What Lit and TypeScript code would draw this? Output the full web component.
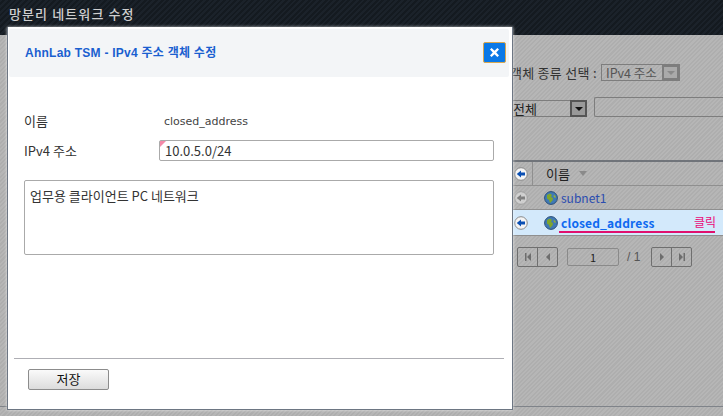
import { LitElement, html, css } from "lit";
import { customElement } from "lit/decorators.js";

const globe = html`<svg class="globe" width="14" height="14" viewBox="0 0 14 14">
  <circle cx="7" cy="7" r="6.4" fill="#3f79b5" stroke="#2a4f78" stroke-width="1"/>
  <path d="M3 4 L6 2.5 L8 4 L7 6 L9 7 L8.5 9.5 L6 12 L5 9 L3 7.5Z" fill="#7fa52c"/>
  <path d="M10 3.5 L12 6 L11 7 L9.5 5.5Z" fill="#8fb03a"/>
</svg>`;

const arrowBtn = (cls: string) => html`<svg class=${cls} width="14" height="14" viewBox="0 0 14 14">
  <circle cx="7" cy="7" r="6.3" fill="#f4f4f4" stroke="#8a8a8a"/>
  <path class="ar" d="M2.8 7 L7 3.6 V5.6 H11 V8.4 H7 V10.4Z"/>
</svg>`;

const pageIcon = (d: string) => html`<svg width="10" height="10" viewBox="0 0 10 10"><path d=${d} fill="#6d6d6d"/></svg>`;

@customElement("app-root")
export class AppRoot extends LitElement {
  static styles = css`
    :host { display: block; width: 723px; height: 416px; position: relative; overflow: hidden;
      font-family: "Noto Sans CJK KR", "Liberation Sans", sans-serif; font-size: 13px; color: #222; }
    .page { height: 416px; display: flex; flex-direction: column;
      background: repeating-linear-gradient(135deg, #b6b6b6 0 1.5px, #aeaeae 1.5px 3px); }
    .top { height: 35px; flex: none; box-sizing: border-box; padding: 5px 0 0 9px;
      background: repeating-linear-gradient(135deg, #1b222a 0 2px, #141a20 2px 4px);
      color: #cfcfcf; font-size: 13px; font-weight: 500; line-height: 18px; letter-spacing: 1.1px; }
    .main { flex: 1; box-sizing: border-box; padding-left: 470px; border-bottom: 1px solid #7f8389;
      margin-bottom: 9px; display: flex; flex-direction: column; }
    .r1 { height: 17px; margin-top: 29px; display: flex; align-items: center; font-size: 13px; color: #333; white-space: nowrap; }
    .r1 .lab { width: 130px; box-sizing: border-box; padding-right: 3px; text-align: right; flex: none; letter-spacing: .3px; }
    .sel1 { margin-left: 1px; width: 79px; height: 17px; box-sizing: border-box; border: 1px solid #7d7d7d; display: flex;
      align-items: center; justify-content: space-between; padding-left: 4px; color: #555; font-size: 12.5px; }
    .sel1 .b { width: 17px; height: 15px; box-sizing: border-box; border: 2px solid #7d7d7d; background: #aaa; display: flex; align-items: center; justify-content: center; }
    .tri { width: 0; height: 0; border: 4px solid transparent; border-top: 4px solid #8a8a8a; border-bottom: 0; }
    .r2 { margin-top: 16px; margin-left: 41px; display: flex; gap: 7px; align-items: flex-end; }
    .sel2 { width: 76px; height: 17px; box-sizing: border-box; border: 1px solid #7d7d7d; border-left: 0; padding-left: 2px; display: flex; align-items: center; justify-content: space-between; color: #222; font-size: 13px; }
    .sel2 .b { width: 17px; height: 17px; box-sizing: border-box; border: 2px solid #555; background: #999; display: flex; align-items: center; justify-content: center; margin-right: -1px; }
    .sel2 .tri { border-top-color: #111; }
    .inp { flex: 1; height: 20px; box-sizing: border-box; border: 1px solid #7d7d7d; border-right: 0; border-radius: 2px 0 0 2px; }
    .table { margin-top: 43px; margin-left: 43px; border-top: 2px solid #70747a; }
    .row { display: flex; align-items: center; border-bottom: 1px solid #8f8f8f; box-sizing: border-box; }
    .hd { height: 24px; }
    .c0 { width: 20px; flex: none; align-self: stretch; box-sizing: border-box; padding-left: 1px; display: flex; align-items: center; }
    .hd .c0 { border-right: 1px solid #8f8f8f; }
    .nm { padding-left: 13px; color: #222; display: flex; align-items: center; gap: 9px; }
    .hd .tri { border-top: 5px solid #8a8a8a; border-left-width: 4px; border-right-width: 4px; }
    .ar { fill: #0a4fb3; }
    .dim { opacity: .45; }
    .dim .ar { fill: #444; }
    .b1 { height: 24px; }
    .b1 .nm, .b2 .nm { gap: 3px; padding-left: 11px; }
    .b1 .t { color: #2b4cb0; font-size: 12px; }
    .b2 { height: 26px; background: #d3e9fb; position: relative; }
    .b2 .t { color: #0f6af0; font-weight: 700; font-size: 12px; letter-spacing: .15px; }
    .b2 .click { position: absolute; left: 181px; top: 3px; color: #ea0a78; font-size: 12px; line-height: 18px; }
    .b2 .ul { position: absolute; left: 46px; width: 156px; top: 21px; height: 1.5px; background: #e0106e; }
    .pager { margin-top: 11px; margin-left: 47px; display: flex; align-items: center; }
    .pg { display: flex; height: 20px; box-sizing: border-box; border: 1px solid #6f6f6f; border-radius: 2px; }
    .pg span { width: 19px; display: flex; align-items: center; justify-content: center; }
    .pg span + span { border-left: 1px solid #6f6f6f; }
    .num { width: 52px; height: 18px; margin-left: 9px; box-sizing: border-box; border: 1px solid #8a8a8a; border-radius: 2px; text-align: center; line-height: 17px; color: #222; font-size: 11px; }
    .tot { width: 32px; box-sizing: border-box; padding-left: 8px; color: #555; font-size: 12px; font-family: "Liberation Sans", sans-serif; }

    .modal { position: absolute; left: 7px; top: 27px; width: 506px; height: 383px; box-sizing: border-box;
      background: #fff; border-right: 1px solid #6d7683; border-bottom: 1px solid #6d7683; border-left: 1px solid #6d7683;
      padding: 2px 3px 0 1px; display: flex; flex-direction: column; box-shadow: 0 0 3px rgba(255,255,255,.7); }
    .mh { height: 48px; flex: none; background: #f3f5f7; border-radius: 2px; display: flex; align-items: center;
      justify-content: space-between; padding: 0 3px 0 16px; }
    .mt { color: #1a5fd0; font-weight: 700; font-size: 12px; padding-bottom: 3px; font-family: "Liberation Sans", "Noto Sans CJK KR", sans-serif; letter-spacing: .25px; }
    .x { width: 23px; height: 21px; margin-bottom: 1px; box-sizing: border-box; background: #0a78e6; border: 1px solid #d8a850; border-radius: 2px; display: flex; align-items: center; justify-content: center; }
    .body { flex: 1; padding: 0 0 0 15px; display: flex; flex-direction: column; }
    .f { display: flex; align-items: center; }
    .f .l { width: 135px; flex: none; color: #333; font-size: 13px; }
    .f1 { margin-top: 32px; height: 22px; }
    .f1 .v { color: #444; font-family: "DejaVu Sans", sans-serif; font-size: 11px; margin: 2px 0 0 5px; }
    .f2 { margin-top: 9px; height: 20px; }
    .ipi { width: 335px; height: 21px; box-sizing: border-box; border: 1px solid #aaa; border-radius: 2px; position: relative; padding-left: 5px; line-height: 19px; font-size: 13px; color: #333; }
    .ipi::before { content: ""; position: absolute; left: 0; top: 0; border: 3.5px solid transparent; border-left-color: #f48aa8; border-top-color: #f48aa8; }
    .ta { margin-top: 20px; width: 470px; height: 75px; box-sizing: border-box; border: 1px solid #aaa; border-radius: 2px; padding: 6px 5px; font-size: 13px; line-height: 18px; color: #333; }
    .sp { flex: 1; }
    .foot { border-top: 1px solid #aeaeb4; margin-left: -10px; margin-right: 5px; height: 51px; flex: none; box-sizing: border-box; padding: 10px 0 0 14px; }
    .btn { width: 81px; height: 21px; box-sizing: border-box; border: 1px solid #8c8c8c; border-radius: 2px;
      background: linear-gradient(#fafafa, #dcdcdc); text-align: center; line-height: 18px; font-size: 13px; color: #111; }
  `;

  render() {
    return html`<div class="page">
        <div class="top">망분리 네트워크 수정</div>
        <div class="main">
          <div class="r1">
            <span class="lab">객체 종류 선택 :</span>
            <div class="sel1"><span>IPv4 주소</span><span class="b"><i class="tri"></i></span></div>
          </div>
          <div class="r2">
            <div class="sel2"><span>전체</span><span class="b"><i class="tri"></i></span></div>
            <div class="inp"></div>
          </div>
          <div class="table">
            <div class="row hd"><div class="c0">${arrowBtn("")}</div><div class="nm">이름 <i class="tri"></i></div></div>
            <div class="row b1"><div class="c0">${arrowBtn("dim")}</div><div class="nm">${globe}<span class="t">subnet1</span></div></div>
            <div class="row b2"><div class="c0">${arrowBtn("")}</div><div class="nm">${globe}<span class="t">closed_address</span></div>
              <span class="click">클릭</span><i class="ul"></i></div>
          </div>
          <div class="pager">
            <div class="pg"><span>${pageIcon("M2 1h1.5v8H2z M8 1v8L4 5z")}</span><span>${pageIcon("M7 1v8L3 5z")}</span></div>
            <div class="num">1</div>
            <div class="tot">/ 1</div>
            <div class="pg"><span>${pageIcon("M3 1v8l4-4z")}</span><span>${pageIcon("M2 1v8l4-4z M6.5 1H8v8H6.5z")}</span></div>
          </div>
        </div>
      </div>
      <div class="modal">
        <div class="mh">
          <span class="mt">AhnLab TSM - IPv4 주소 객체 수정</span>
          <span class="x"><svg width="11" height="11" viewBox="0 0 11 11"><path d="M2.6 1 L5.5 3.8 L8.4 1 L10 2.6 L7.2 5.5 L10 8.4 L8.4 10 L5.5 7.2 L2.6 10 L1 8.4 L3.8 5.5 L1 2.6Z" fill="#fff"/></svg></span>
        </div>
        <div class="body">
          <div class="f f1"><span class="l">이름</span><span class="v">closed_address</span></div>
          <div class="f f2"><span class="l">IPv4 주소</span><div class="ipi">10.0.5.0/24</div></div>
          <div class="ta">업무용 클라이언트 PC 네트워크</div>
          <div class="sp"></div>
          <div class="foot"><div class="btn">저장</div></div>
        </div>
      </div>`;
  }
}
